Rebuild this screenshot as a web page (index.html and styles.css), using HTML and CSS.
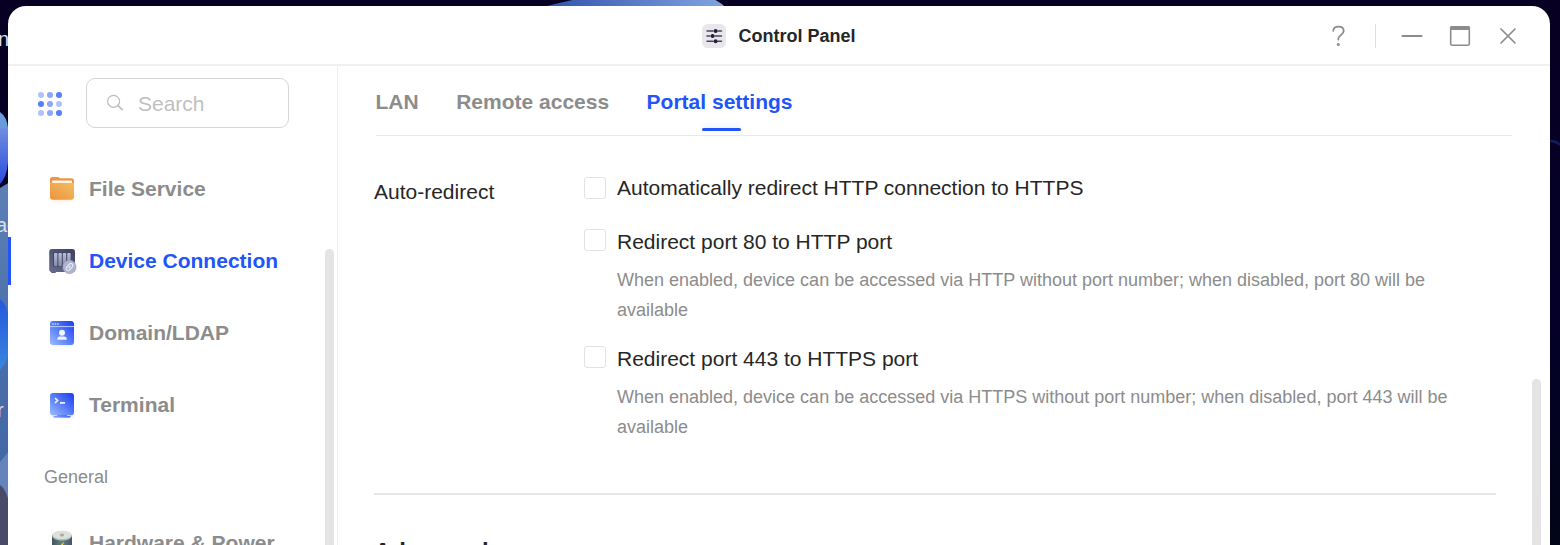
FILE: index.html
```
<!DOCTYPE html>
<html lang="en">
<head>
<meta charset="utf-8">
<title>Control Panel</title>
<link rel="stylesheet" href="styles.css">
</head>
<body>
<div class="desktop">
  <svg class="wallpaper" width="1560" height="545" viewBox="0 0 1560 545">
    <defs>
      <linearGradient id="wp" x1="0" y1="0" x2="0" y2="1"><stop offset="0" stop-color="#5c7fb4"/><stop offset=".55" stop-color="#486ca8"/><stop offset="1" stop-color="#3f62a5"/></linearGradient>
      <linearGradient id="app1" x1="0" y1="0" x2="0" y2="1"><stop offset="0" stop-color="#6f8ede"/><stop offset="1" stop-color="#2c4be0"/></linearGradient>
      <linearGradient id="app2" x1="0" y1="0" x2="0" y2="1"><stop offset="0" stop-color="#2458dc"/><stop offset="1" stop-color="#3a86de"/></linearGradient>
      <linearGradient id="arc" x1="0" y1="0" x2="1" y2="0"><stop offset="0" stop-color="#2d50ad"/><stop offset="1" stop-color="#82a6e0"/></linearGradient>
      <linearGradient id="edge" x1="0" y1="0" x2="0" y2="1"><stop offset="0" stop-color="#080022"/><stop offset=".6" stop-color="#040028"/><stop offset="1" stop-color="#010516"/></linearGradient>
    </defs>
    <rect width="1560" height="545" fill="url(#edge)"/>
    <path d="M540 8Q575-2 600-4H705Q719 0 726 8Z" fill="url(#arc)"/>
    <path d="M1548 140Q1555 139 1560 143V146Q1554 142 1548 142Z" fill="#101c56"/>
    <path d="M0 188L10 182V545H0Z" fill="url(#wp)"/>
    <path d="M0 112Q7 117 8 128H0Z" fill="#6a9bdc"/>
    <path d="M0 128H8V162Q7 177 0 184Z" fill="url(#app1)"/>
    <path d="M0 299Q7 304 9 319V350Q7 363 0 370Z" fill="url(#app2)"/>
    <path d="M0 462L9 451V500L0 486Z" fill="#6484bb"/>
    <path d="M0 485Q6 489 9 503V545H0Z" fill="#494968"/>
  </svg>
  <span class="desk-label desk-label-a">n</span>
  <span class="desk-label desk-label-b">ag</span>
  <span class="desk-label desk-label-c">r</span>

  <div class="window">
    <header class="titlebar">
      <div class="title">
        <svg width="24" height="24" viewBox="0 0 24 24"><rect width="24" height="24" rx="5.5" fill="#e9e7ec"/><g stroke="#4b4658" stroke-width="1.5" stroke-linecap="round"><path d="M5 7h6M16 7h3.5M5 12h3M13 12h6.500M5 17.300h6M16 17.300h3.500"/></g><g fill="#251d3e"><circle cx="13.600" cy="7" r="2"/><circle cx="10.600" cy="12" r="2"/><circle cx="13.600" cy="17.300" r="2"/></g></svg>
        <h1>Control Panel</h1>
      </div>
      <div class="controls">
        <svg width="14" height="22" viewBox="0 0 14 22" fill="none" stroke="#8c8c8c" stroke-width="1.800" stroke-linecap="round"><path d="M2.300 5.800C2.500 3 4.700 1.700 7.500 1.700C10.700 1.700 12.700 3.300 12.700 6C12.700 10 7.300 9.800 7.300 13.800V14.600"/><circle cx="7.300" cy="19.500" r=".7"/></svg>
        <i class="separator"></i>
        <svg width="22" height="22" viewBox="0 0 22 22"><path d="M1.500 11h19" stroke="#8c8c8c" stroke-width="2" stroke-linecap="round"/></svg>
        <svg width="22" height="22" viewBox="0 0 22 22"><rect x="1.700" y="2" width="18.600" height="18.300" rx="1.500" fill="none" stroke="#8c8c8c" stroke-width="1.600"/><path d="M1 5V2.500Q1 1 2.500 1H19.500Q21 1 21 2.500V5Z" fill="#8c8c8c"/></svg>
        <svg width="22" height="22" viewBox="0 0 22 22"><path d="M4 4L18 18M18 4L4 18" stroke="#8c8c8c" stroke-width="1.700" stroke-linecap="round"/></svg>
      </div>
    </header>
    <div class="body">
      <aside class="sidebar">
        <div class="search-row">
          <svg width="26" height="26" viewBox="0 0 26 26"><g fill="#b0c2ff"><circle cx="4" cy="4" r="3.050"/><circle cx="22" cy="13" r="3.050"/><circle cx="4" cy="22" r="3.050"/></g><g fill="#8fa8fb"><circle cx="13" cy="4" r="3.050"/><circle cx="13" cy="13" r="3.050"/><circle cx="13" cy="22" r="3.050"/></g><g fill="#567ff8"><circle cx="22" cy="4" r="3.050"/><circle cx="4" cy="13" r="3.050"/><circle cx="22" cy="22" r="3.050"/></g></svg>
          <div class="search">
            <svg width="18" height="18" viewBox="0 0 18 18" fill="none" stroke="#bdbdbd" stroke-width="1.200" stroke-linecap="round"><circle cx="7.600" cy="7.300" r="6"/><path d="M12 11.700L16.200 15.700" stroke-width="1.700"/></svg>
            <span>Search</span>
          </div>
        </div>
        <nav class="nav">
          <a class="nav-item">
            <svg width="32" height="32" viewBox="0 0 32 32"><defs><linearGradient id="fold" x1="0" y1="1" x2="1" y2="0"><stop stop-color="#eb9340"/><stop offset="1" stop-color="#f4bd60"/></linearGradient></defs><path class="glow glow-orange" d="M6 20H26V27H6Z"/><path d="M4 6.500Q4 4 6.500 4H11Q13 4 14 5.200H25Q28 5.200 28 8V14H4Z" fill="#ec9545"/><rect x="6" y="7.600" width="20" height="5" rx="1" fill="#fff2df"/><path d="M4 10H28V23.700Q28 26.700 25 26.700H7Q4 26.700 4 23.700Z" fill="url(#fold)"/></svg>
            <span>File Service</span>
          </a>
          <a class="nav-item active">
            <svg width="32" height="32" viewBox="0 0 32 32"><defs><linearGradient id="nas" x1="0" y1="1" x2="1" y2="0"><stop stop-color="#666e90"/><stop offset="1" stop-color="#3e4160"/></linearGradient><linearGradient id="bay" x1="0" y1="0" x2="0" y2="1"><stop stop-color="#babed3"/><stop offset="1" stop-color="#8289a9"/></linearGradient></defs><rect x="5" y="25" width="5" height="3" rx="1" fill="#5a6182"/><rect x="3.200" y="4" width="25.800" height="23" rx="2.800" fill="url(#nas)"/><rect x="7" y="7.200" width="18.500" height="14.500" rx="1" fill="#414563"/><g fill="url(#bay)"><rect x="8" y="8" width="3.400" height="13.300" rx=".8"/><rect x="12.400" y="8" width="3.400" height="13.300" rx=".8"/><rect x="16.800" y="8" width="3.400" height="13.300" rx=".8"/><rect x="21.200" y="8" width="3.400" height="13.300" rx=".8"/></g><circle cx="23.500" cy="22" r="6.700" fill="#adb3d1" stroke="#979dbb" stroke-width=".5"/><g transform="rotate(-48 23.500 22)" fill="none" stroke="#e7eaf5" stroke-width="1.200"><rect x="19.500" y="20.100" width="8" height="3.900" rx="1.950"/><path d="M22 22h3"/></g></svg>
            <span>Device Connection</span>
          </a>
          <a class="nav-item">
            <svg width="32" height="32" viewBox="0 0 32 32"><defs><linearGradient id="blue" x1="0" y1="1" x2="1" y2="0"><stop stop-color="#9dbbff"/><stop offset=".5" stop-color="#567cf8"/><stop offset="1" stop-color="#1c3af1"/></linearGradient></defs><path class="glow glow-blue" d="M6 20H26V27H6Z"/><rect x="4" y="4" width="24" height="24" rx="3" fill="url(#blue)"/><path d="M4 9.600H28" stroke="#b9ccff" stroke-width="1"/><g fill="#b7c9ff"><circle cx="7" cy="7" r=".9"/><circle cx="9.500" cy="7" r=".9"/><circle cx="12" cy="7" r=".9"/></g><g fill="#eef2ff"><circle cx="16" cy="15.800" r="3"/><path d="M11.300 22.800V22Q11.300 19.500 13.800 19.500H18.200Q20.700 19.500 20.700 22V22.800Z"/></g></svg>
            <span>Domain/LDAP</span>
          </a>
          <a class="nav-item">
            <svg width="32" height="32" viewBox="0 0 32 32"><path class="glow glow-blue" d="M6 20H26V27H6Z"/><path d="M11 25H21V27H24.500Q25 28.700 23.500 28.700H8.500Q7 28.700 7.500 27H11Z" fill="url(#blue)"/><rect x="4" y="4" width="24" height="22.300" rx="3" fill="url(#blue)"/><path d="M9 9L11.600 11.500L9 14M14 13.800H19" fill="none" stroke="#eef2ff" stroke-width="1.700"/></svg>
            <span>Terminal</span>
          </a>
          <div class="nav-group">General</div>
          <a class="nav-item">
            <svg width="32" height="32" viewBox="0 0 32 32"><defs><linearGradient id="bat" x1="0" y1="0" x2="1" y2="0"><stop stop-color="#435861"/><stop offset=".5" stop-color="#648376"/><stop offset="1" stop-color="#465371"/></linearGradient></defs><path d="M6 8V26Q6 30 16 30T26 26V8Z" fill="url(#bat)"/><ellipse cx="16" cy="8.800" rx="10" ry="4.800" fill="#b9c0bb"/><ellipse cx="16" cy="7.900" rx="9.500" ry="4.200" fill="#dbe1dd"/><ellipse cx="16" cy="8" rx="2.200" ry="1.500" fill="#b9a99a"/><path d="M18 14.500L11.500 22H15.500L14 28L20.500 19.500H16.500Z" fill="#ffd93b"/></svg>
            <span>Hardware &amp; Power</span>
          </a>
        </nav>
        <i class="active-mark"></i>
        <i class="scrollbar side-scroll"></i>
      </aside>
      <main class="content">
        <div class="tabs">
          <a>LAN</a>
          <a>Remote access</a>
          <a class="selected">Portal settings</a>
        </div>
        <section class="settings">
          <div class="label">Auto-redirect</div>
          <div class="options">
            <div class="option">
              <i class="checkbox"></i>
              <div class="name">Automatically redirect HTTP connection to HTTPS</div>
            </div>
            <div class="option">
              <i class="checkbox"></i>
              <div>
                <div class="name">Redirect port 80 to HTTP port</div>
                <p>When enabled, device can be accessed via HTTP without port number; when disabled, port 80 will be available</p>
              </div>
            </div>
            <div class="option">
              <i class="checkbox"></i>
              <div>
                <div class="name">Redirect port 443 to HTTPS port</div>
                <p>When enabled, device can be accessed via HTTPS without port number; when disabled, port 443 will be available</p>
              </div>
            </div>
          </div>
        </section>
        <h2>Advanced</h2>
        <i class="scrollbar main-scroll"></i>
      </main>
    </div>
  </div>
</div>
</body>
</html>
```
FILE: styles.css
```
* { box-sizing: border-box; }
body { margin: 0; font-family: "Liberation Sans", Arial, sans-serif; }
svg { display: block; flex: none; }
h1, h2, p { margin: 0; }

.desktop { position: relative; width: 1560px; height: 545px; padding: 6px 10px 0 8px; overflow: hidden; }
.wallpaper { position: absolute; inset: 0; }
.desk-label { position: absolute; color: #dcdfe8; font-size: 20px; line-height: 24px; }
.desk-label-a { left: -2px; top: 27px; }
.desk-label-b { left: -4px; top: 213px; }
.desk-label-c { left: -3px; top: 398px; }

.window { position: relative; height: 560px; background: #fff; border-radius: 18px 18px 0 0; overflow: hidden; }
.titlebar { height: 60px; border-bottom: 2px solid #f0f0f0; display: flex; justify-content: center; align-items: center; position: relative; }
.title { display: flex; align-items: center; gap: 12px; padding-top: 2px; }
.title h1 { font-size: 18px; line-height: 24px; color: #262626; }
.controls { position: absolute; right: 31px; top: 18px; display: flex; align-items: center; gap: 26px; height: 24px; }
.separator { width: 1px; height: 24px; background: #ddd; margin-left: 4px; margin-right: -1px; }

.body { display: flex; height: 500px; }
.sidebar { position: relative; width: 330px; border-right: 1px solid #eee; flex: none; }
.search-row { display: flex; align-items: center; gap: 23px; padding: 12px 0 0 29px; }
.search-row > svg { margin-top: 2px; }
.search { display: flex; align-items: center; gap: 14px; width: 203px; height: 50px; padding-left: 19px; border: 1px solid #d6d6d6; border-radius: 9px; color: #bfbfbf; font-size: 21px; }
.search svg { margin-top: -1px; }
.search span { padding-top: 2px; }
.nav { padding: 25px 0 0 38px; }
.nav-item { display: flex; align-items: center; gap: 11px; height: 72px; font-size: 21px; font-weight: 700; color: #8c8c8c; white-space: nowrap; }
.nav-item.active { color: #2254f9; }
.nav-group { height: 66px; padding-top: 25px; margin-left: -2px; font-size: 18px; line-height: 22px; color: #8c8c8c; }
.glow { filter: blur(2px); opacity: .35; }
.glow-orange { fill: #eb9340; }
.glow-blue { fill: #567cf8; }
.active-mark { position: absolute; left: 0; top: 171px; width: 3px; height: 48px; background: #2254f9; }
.scrollbar { position: absolute; width: 9px; height: 400px; border-radius: 5px; background: #e4e4e4; }
.side-scroll { left: 317px; top: 183px; }

.content { position: relative; flex: 1; padding: 0 38px 0 36px; }
.tabs { display: flex; gap: 37.500px; height: 70px; padding: 24px 0 0; margin-left: 1.500px; border-bottom: 1px solid #e9e9e9; font-size: 21px; line-height: 24px; font-weight: 700; color: #8c8c8c; }
.tabs a { position: relative; }
.tabs .selected { color: #2254f9; }
.tabs .selected::after { content: ""; position: absolute; left: 55.500px; top: 38px; width: 39px; height: 3px; border-radius: 2px; background: #2254f9; box-shadow: 0 -2px 6px #2254f922; }
.settings { display: flex; height: 359px; width: 1122px; padding-top: 39px; border-bottom: 2px solid #e6e6e6; font-size: 21px; line-height: 26px; color: #262626; }
.label { width: 210px; padding-top: 4px; }
.options { width: 885px; }
.option { display: flex; align-items: flex-start; gap: 11px; height: 54px; }
.option + .option { height: 117px; }
.checkbox { flex: none; width: 22px; height: 22px; margin-top: 2px; border: 1.5px solid #e2e2e2; border-radius: 3px; }
.option + .option .checkbox { margin-top: 0; }
.option p { font-size: 18px; line-height: 30px; color: #8c8c8c; padding-top: 10px; }
.content h2 { padding-top: 43px; font-size: 24px; line-height: 28px; color: #262626; }
.main-scroll { left: 1194px; top: 313px; }
```
